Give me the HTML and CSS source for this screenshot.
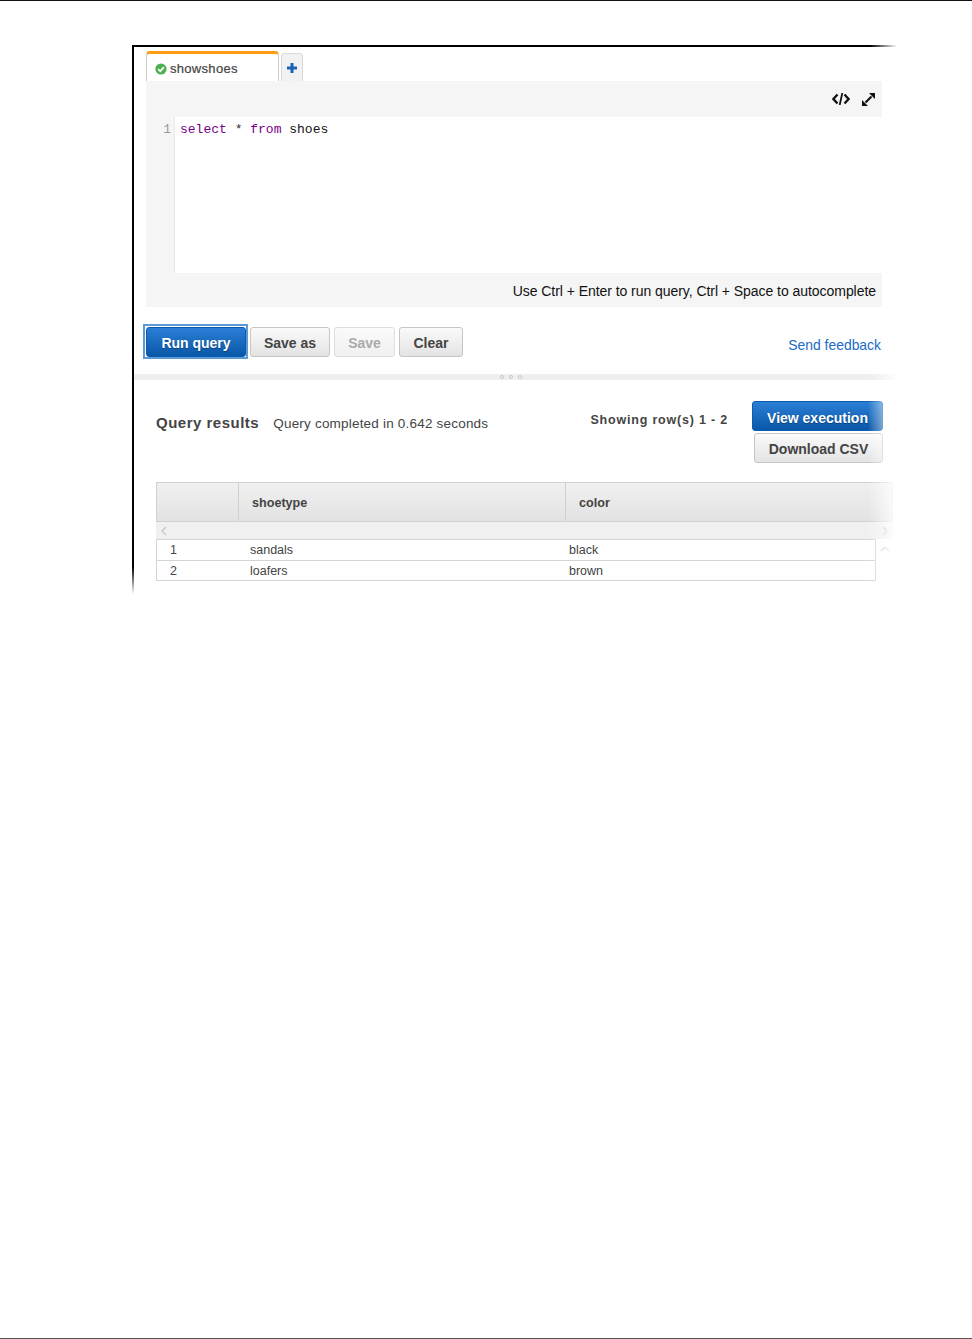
FILE: index.html
```html
<!DOCTYPE html>
<html lang="en">
<head>
<meta charset="utf-8">
<title>Query editor</title>
<link rel="stylesheet" href="styles.css">
</head>
<body>
<div class="page">
  <div class="frame">
    <section class="query-pane">
      <div class="tabs">
        <div class="tab">
          <svg class="tab-icon" viewBox="0 0 12 12" width="12" height="12"><circle cx="6" cy="6" r="5.6" fill="#4caf50"/><path d="M3.2 6.2 5.2 8.2 8.9 4.2" fill="none" stroke="#fff" stroke-width="1.7"/></svg>
          <span>showshoes</span>
        </div>
        <div class="tab-add">
          <svg viewBox="0 0 12 12" width="12" height="12"><path d="M6 1v10M1 6h10" stroke="#1a63b4" stroke-width="3"/></svg>
        </div>
      </div>
      <div class="editor">
        <div class="toolbar">
          <svg viewBox="0 0 18 12" width="18" height="12"><path d="M5.5 1.5 1.4 6l4.1 4.500M12.500 1.500 16.600 6l-4.100 4.500" fill="none" stroke="#111" stroke-width="2.3"/><path d="M10.300 0 7.700 12" stroke="#111" stroke-width="1.800"/></svg>
          <svg viewBox="0 0 13 13" width="13" height="13"><path d="M7 0h6v6zM0 13V7l6 6z" fill="#111"/><path d="M3.500 9.500l6-6" stroke="#111" stroke-width="2.200"/></svg>
        </div>
        <div class="code-area">
          <div class="gutter">1</div>
          <div class="code"><span class="kw">select</span> <span class="star">*</span> <span class="kw">from</span> shoes</div>
        </div>
        <div class="hint">Use Ctrl + Enter to run query, Ctrl + Space to autocomplete</div>
      </div>
      <div class="actions">
        <button class="btn btn-primary btn-focus">Run query</button>
        <button class="btn btn-saveas">Save as</button>
        <button class="btn btn-disabled">Save</button>
        <button class="btn btn-clear">Clear</button>
        <a class="feedback">Send feedback</a>
      </div>
    </section>
    <div class="splitter"><i></i><i></i><i></i></div>
    <section class="results">
      <div class="results-head">
        <h2>Query results</h2>
        <span class="status">Query completed in 0.642 seconds</span>
        <span class="rows">Showing row(s) 1 - 2</span>
        <div class="result-actions">
          <button class="btn btn-primary btn-view">View execution</button>
          <button class="btn btn-csv">Download CSV</button>
        </div>
      </div>
      <div class="table">
        <div class="thead">
          <div class="th th-num"></div>
          <div class="th th-type">shoetype</div>
          <div class="th th-color">color</div>
        </div>
        <div class="hscroll">
          <svg viewBox="0 0 6 10" width="6" height="10"><path d="M5 1 1 5l4 4" fill="none" stroke="#c4c4c4" stroke-width="1.2"/></svg>
          <svg viewBox="0 0 6 10" width="6" height="10"><path d="M1 1l4 4-4 4" fill="none" stroke="#c4c4c4" stroke-width="1.2"/></svg>
        </div>
        <div class="tbody-wrap">
          <div class="tbody">
            <div class="tr"><div class="td td-num">1</div><div class="td td-type">sandals</div><div class="td">black</div></div>
            <div class="tr"><div class="td td-num">2</div><div class="td td-type">loafers</div><div class="td">brown</div></div>
          </div>
          <svg class="vscroll" viewBox="0 0 10 6" width="10" height="6"><path d="M1 5l4-4 4 4" fill="none" stroke="#c4c4c4" stroke-width="1.2"/></svg>
        </div>
      </div>
    </section>
  </div>
</div>
</body>
</html>
```
FILE: styles.css
```css
* { box-sizing: border-box; }
html, body { margin: 0; padding: 0; background: #fff; }
body { font-family: "Liberation Sans", Arial, sans-serif; color: #444; }
.page {
  height: 1339px;
  border-top: 1px solid #111;
  border-bottom: 1px solid #555;
  overflow: hidden;
}
.frame {
  position: relative;
  width: 765px;
  height: 549px;
  margin: 44px 0 0 132px;
  padding-top: 6px;
}
.frame::before {
  content: "";
  position: absolute;
  left: 0; top: 0;
  width: 100%; height: 2px;
  background: linear-gradient(to right, #000 738px, #fff 765px);
}
.frame::after {
  content: "";
  position: absolute;
  left: 0; top: 0;
  width: 2px; height: 549px;
  background: linear-gradient(to bottom, #000 522px, #fff 549px);
}
.query-pane { padding: 0 15px 0 14px; }
.tabs { display: flex; align-items: flex-end; gap: 2px; height: 30px; }
.tab {
  display: flex;
  align-items: center;
  gap: 3px;
  width: 133px;
  height: 30px;
  padding: 2px 0 0 8px;
  background: #fff;
  border: 1px solid #ccc;
  border-top: 3px solid #ff9c14;
  border-bottom: 0;
  border-radius: 4px 4px 0 0;
  font-size: 13px;
  letter-spacing: 0.3px;
  -webkit-text-stroke: 0.2px #444;
}
.tab-icon { flex: none; }
.tab-add {
  display: flex;
  align-items: center;
  justify-content: center;
  width: 22px;
  height: 28px;
  background: #f2f2f2;
  border: 1px solid #d8d8d8;
  border-bottom: 0;
  border-radius: 4px 4px 0 0;
}
.editor { background: #f5f5f5; }
.toolbar {
  display: flex;
  align-items: center;
  justify-content: flex-end;
  gap: 12px;
  height: 36px;
  padding-right: 7px;
}
.code-area { display: flex; height: 156px; }
.gutter {
  width: 28px;
  padding: 5px 3px 0 0;
  text-align: right;
  font: 13px/15px "Liberation Mono", monospace;
  color: #999;
}
.code {
  flex: 1;
  padding: 5px 0 0 5px;
  background: #fff;
  border-left: 1px solid #e8e8e8;
  font: 13px/15px "Liberation Mono", monospace;
  color: #111;
}
.kw { color: #708; }
.star { color: #333; }
.hint {
  height: 34px;
  padding: 10px 6px 0 0;
  text-align: right;
  font-size: 14px;
  line-height: 17px;
  letter-spacing: -0.05px;
  color: #111;
}
.actions { display: flex; align-items: center; gap: 4px; height: 30px; margin-top: 20px; }
.btn {
  height: 30px;
  padding: 2px 0 0;
  border: 1px solid #c6c6c6;
  border-radius: 3px;
  background: linear-gradient(to bottom, #fafafa, #e3e3e3);
  font-family: "Liberation Sans", Arial, sans-serif;
  font-size: 14px;
  font-weight: 700;
  color: #444;
}
.btn-primary {
  background: linear-gradient(to bottom, #2a7fd6, #0a57a8);
  border: 1px solid #0b5cb0;
  color: #fff;
  text-shadow: 0 1px 1px #0a3f7a;
}
.btn-focus { position: relative; width: 100px; }
.btn-focus::before {
  content: "";
  position: absolute;
  inset: -4px -3px -3px -4px;
  border: 2px solid #5b9bd5;
}
.btn-saveas { width: 80px; }
.btn-disabled { width: 61px; color: #aaa; background: linear-gradient(to bottom, #fafafa, #f0f0f0); border-color: #dedede; }
.btn-clear { width: 64px; }
.feedback { margin: 6px 1px 0 auto; font-size: 13.9px; color: #1a6bc4; }
.splitter {
  display: flex;
  justify-content: center;
  align-items: center;
  gap: 5px;
  width: 763px;
  height: 6px;
  margin: 17px 0 0 2px;
  padding-right: 10px;
  background: #eee;
}
.splitter i { width: 4px; height: 4px; border: 1px solid #c8c8c8; border-radius: 50%; background: #f4f4f4; }
.results { padding: 0 4px 0 24px; position: relative; }
.results::after {
  content: "";
  position: absolute;
  top: -8px; right: -1px;
  width: 30px;
  height: 224px;
  background: linear-gradient(to right, rgba(255,255,255,0), rgba(255,255,255,.55) 60%, #fff);
  pointer-events: none;
}
.results-head {
  display: flex;
  align-items: flex-start;
  height: 102px;
  padding-top: 21px;
  padding-right: 10px;
}
.results-head h2 { margin: 13px 0 0; font-size: 15px; line-height: 17px; font-weight: 700; color: #444; letter-spacing: 0.5px; }
.status { margin: 14px 0 0 14px; font-size: 13.5px; line-height: 17px; letter-spacing: 0.2px; }
.rows { margin: 11px 24px 0 auto; font-size: 12.5px; line-height: 17px; font-weight: 700; letter-spacing: 0.8px; }
.result-actions { display: flex; flex-direction: column; align-items: flex-end; gap: 2px; width: 131px; }
.btn-view { width: 131px; padding-top: 3px; }
.btn-csv { width: 129px; }
.table { width: 737px; }
.thead {
  display: flex;
  height: 40px;
  border: 1px solid #d0d0d0;
  background: linear-gradient(to bottom, #f0f0f0, #e2e2e2);
  font-size: 12.6px;
  font-weight: 700;
}
.th { display: flex; align-items: center; padding-top: 2px; }
.th-num { width: 82px; border-right: 1px solid #d0d0d0; }
.th-type { width: 327px; padding-left: 13px; border-right: 1px solid #d0d0d0; }
.th-color { flex: 1; padding-left: 13px; }
.hscroll {
  display: flex;
  justify-content: space-between;
  align-items: center;
  height: 17px;
  padding: 0 5px 0 5px;
  background: #f0f0f0;
}
.tbody-wrap { display: flex; align-items: flex-start; gap: 4px; }
.tbody { width: 720px; border: 1px solid #d4d4d4; font-size: 12.5px; }
.tr { display: flex; align-items: center; height: 20px; }
.tr + .tr { border-top: 1px solid #d4d4d4; }
.td-num { width: 93px; padding-left: 13px; }
.td-type { width: 319px; }
.vscroll { margin-top: 7px; }
```
